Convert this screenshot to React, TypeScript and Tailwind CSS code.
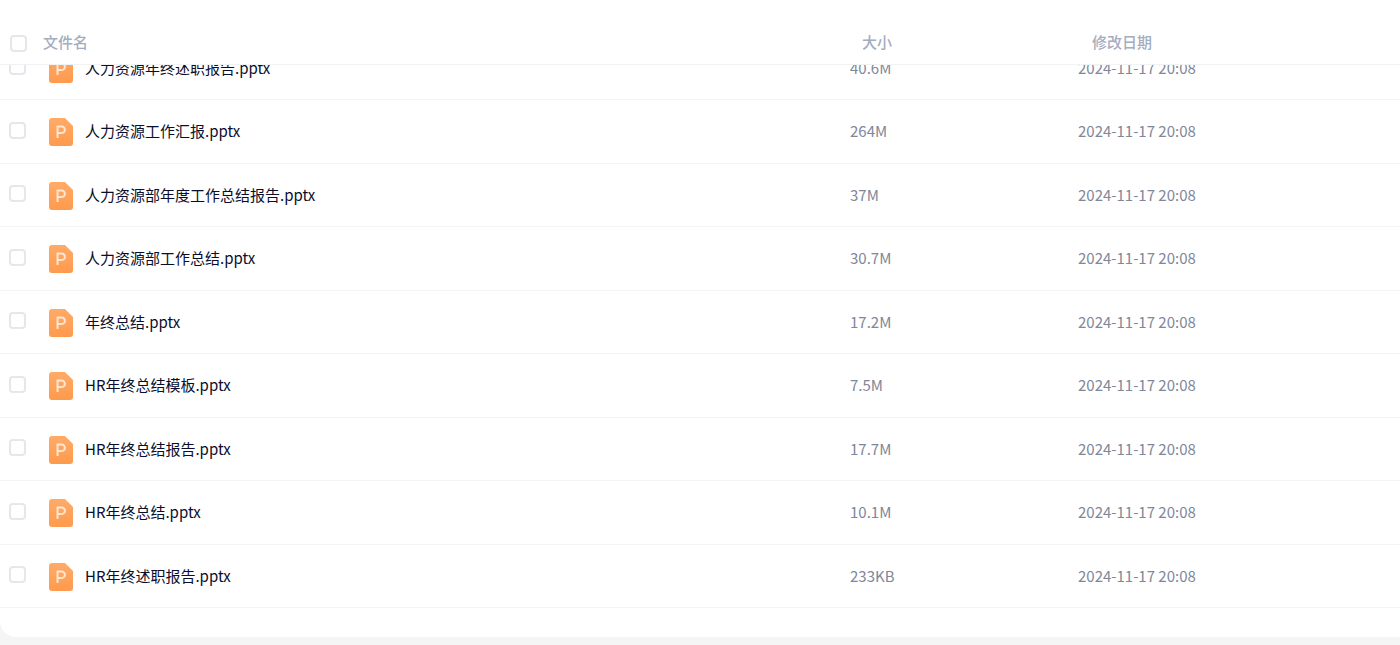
const files = [
  { name: '人力资源年终述职报告.pptx', size: '40.6M' },
  { name: '人力资源工作汇报.pptx', size: '264M' },
  { name: '人力资源部年度工作总结报告.pptx', size: '37M' },
  { name: '人力资源部工作总结.pptx', size: '30.7M' },
  { name: '年终总结.pptx', size: '17.2M' },
  { name: 'HR年终总结模板.pptx', size: '7.5M' },
  { name: 'HR年终总结报告.pptx', size: '17.7M' },
  { name: 'HR年终总结.pptx', size: '10.1M' },
  { name: 'HR年终述职报告.pptx', size: '233KB' },
];

function PptIcon() {
  return (
    <svg width="24" height="28" viewBox="0 0 24 28" className="mt-[2px] shrink-0">
      <defs>
        <linearGradient id="ppt-fill" x1="0" y1="0" x2="0" y2="1">
          <stop offset="0" stopColor="#ffab68" />
          <stop offset="1" stopColor="#fe9a4d" />
        </linearGradient>
      </defs>
      <path d="M3 0H16L24 8V25a3 3 0 0 1-3 3H3a3 3 0 0 1-3-3V3a3 3 0 0 1 3-3Z" fill="url(#ppt-fill)" />
      <path d="M8.5 20V8.5H12.6a3.3 3.3 0 0 1 0 6.6H8.5" fill="none" stroke="#ffe6d3" strokeWidth="2" />
    </svg>
  );
}

function Checkbox() {
  return <span className="-mt-[2px] block h-[17px] w-[17px] shrink-0 rounded-[4px] border-2 border-[#e6e7ea] bg-white" />;
}

export default function App() {
  return (
    <div className="h-[645px] overflow-hidden bg-[#f5f5f6] font-['Noto_Sans_CJK_SC','Noto_Sans',sans-serif] text-[15px]">
      <div className="flex h-[637px] flex-col overflow-hidden rounded-bl-2xl bg-white">
        {/* Header */}
        <div className="flex h-[65px] shrink-0 items-end border-b border-[#f1f2f4] bg-white pb-[11px] font-medium text-[#a4adbf]">
          <div className="flex w-[862px] items-center pl-[10px]">
            <span className="mt-1 block h-[17px] w-[17px] rounded-[4px] border-2 border-[#e6e7ea]" />
            <span className="ml-4">文件名</span>
          </div>
          <div className="w-[230px]">大小</div>
          <div>修改日期</div>
        </div>

        {/* File rows */}
        <div className="min-h-0 flex-1 overflow-hidden">
          <div className="-mt-[28.5px]">
            {files.map((file) => (
              <div key={file.name} className="flex h-[63.5px] items-center border-b border-[#f3f4f6] pl-[9px]">
                <Checkbox />
                <div className="ml-[23px] flex w-[801px] items-center">
                  <PptIcon />
                  <span className="ml-3 text-[#0a0e2c]">{file.name}</span>
                </div>
                <div className="w-[228px] text-[#80879a]">{file.size}</div>
                <div className="text-[#80879a]">2024-11-17 20:08</div>
              </div>
            ))}
          </div>
        </div>
      </div>
    </div>
  );
}
